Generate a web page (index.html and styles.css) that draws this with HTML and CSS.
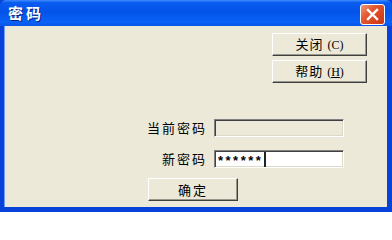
FILE: index.html
```html
<!DOCTYPE html>
<html lang="zh-CN">
<head>
<meta charset="utf-8">
<title>密码</title>
<link rel="stylesheet" href="styles.css">
</head>
<body>
<div class="window">
  <div class="titlebar">
    <span class="title">密码</span>
    <button class="close" aria-label="关闭">
      <svg width="13" height="13" viewBox="0 0 13 13"><path d="M2 2 L11 11 M11 2 L2 11" stroke="#fff" stroke-width="2.4" stroke-linecap="square"/></svg>
    </button>
  </div>
  <div class="client">
    <div class="side-buttons">
      <button class="btn side">关闭 <span class="acc">(C)</span></button>
      <button class="btn side">帮助 <span class="acc">(<u>H</u>)</span></button>
    </div>
    <div class="form">
      <div class="row">
        <label class="label">当前密码</label>
        <div class="field disabled"></div>
      </div>
      <div class="row">
        <label class="label">新密码</label>
        <div class="field"><span class="stars">******</span><span class="caret"></span></div>
      </div>
      <div class="ok-row">
        <button class="btn ok">确定</button>
      </div>
    </div>
  </div>
</div>
</body>
</html>
```
FILE: styles.css
```css
html, body {
  margin: 0;
  padding: 0;
  background: #ffffff;
}
body {
  width: 392px;
  height: 212px;
  overflow: hidden;
  font-family: "Noto Sans CJK SC", "Liberation Sans", sans-serif;
}
.window {
  width: 392px;
  height: 212px;
  display: flex;
  flex-direction: column;
  box-sizing: border-box;
  background: #0842d8;
}
.titlebar {
  height: 26px;
  flex: none;
  display: flex;
  align-items: flex-start;
  justify-content: space-between;
  background: linear-gradient(180deg, #3d8eff 0%, #0a5cf0 10%, #0453e9 45%, #0a62f6 85%, #0a55e6 100%);
  border-radius: 6px 6px 0 0;
}
.title {
  margin: 5px 0 0 8px;
  color: #fff;
  font-weight: bold;
  font-size: 15px;
  letter-spacing: 3px;
  line-height: 16px;
  text-shadow: 1px 1px 0 #0b1f7a;
}
.close {
  margin: 4px 7px 0 0;
  width: 25px;
  height: 21px;
  padding: 0;
  border: 1px solid #fff;
  border-radius: 3px;
  background: linear-gradient(135deg, #f09a7c 0%, #e35b33 35%, #d9431e 70%, #c73714 100%);
  display: flex;
  align-items: center;
  justify-content: center;
}
.client {
  flex: 1;
  margin: 0 5px 5px 4px;
  background: #ece9d8;
  display: flex;
  flex-direction: column;
  box-shadow: inset 1px 0 #6f9ef5;
}
.side-buttons {
  align-self: flex-end;
  margin: 7px 20px 0 0;
  display: flex;
  flex-direction: column;
  gap: 4px;
}
.btn {
  box-sizing: border-box;
  height: 23px;
  padding: 0;
  background: #ece9d8;
  border: 1px solid;
  border-color: #ffffff #404040 #404040 #ffffff;
  box-shadow: inset -1px -1px #9a988c;
  font-family: "Noto Sans CJK SC", sans-serif;
  font-size: 13px;
  color: #000;
  line-height: 19px;
}
.side {
  width: 95px;
  letter-spacing: 1px;
}
.acc {
  font-family: "Liberation Serif", "Noto Sans CJK SC", serif;
  font-size: 12px;
  letter-spacing: 0;
}
.form {
  margin-top: 36px;
  display: flex;
  flex-direction: column;
}
.row {
  display: flex;
  align-items: center;
  gap: 9px;
  height: 18px;
  margin-bottom: 13px;
}
.label {
  width: 203px;
  text-align: right;
  font-size: 13px;
  letter-spacing: 2px;
  line-height: 18px;
  color: #000;
  margin-right: -2px;
}
.field {
  box-sizing: border-box;
  width: 130px;
  height: 18px;
  background: #fff;
  border: 1px solid;
  border-color: #808080 #ffffff #ffffff #808080;
  box-shadow: inset 1px 1px #404040, inset -1px -1px #dcd9c8;
  display: flex;
  align-items: center;
  padding-left: 3px;
}
.field.disabled {
  background: #ece9d8;
}
.stars {
  font-family: "Liberation Sans", sans-serif;
  font-size: 13px;
  font-weight: bold;
  letter-spacing: 2.5px;
  line-height: 14px;
  padding-top: 3px;
}
.caret {
  width: 2px;
  height: 15px;
  background: #222;
  margin-left: 1px;
}
.ok-row {
  display: flex;
  padding-left: 144px;
  margin-top: -3px;
}
.ok {
  width: 90px;
  letter-spacing: 2px;
}
```
